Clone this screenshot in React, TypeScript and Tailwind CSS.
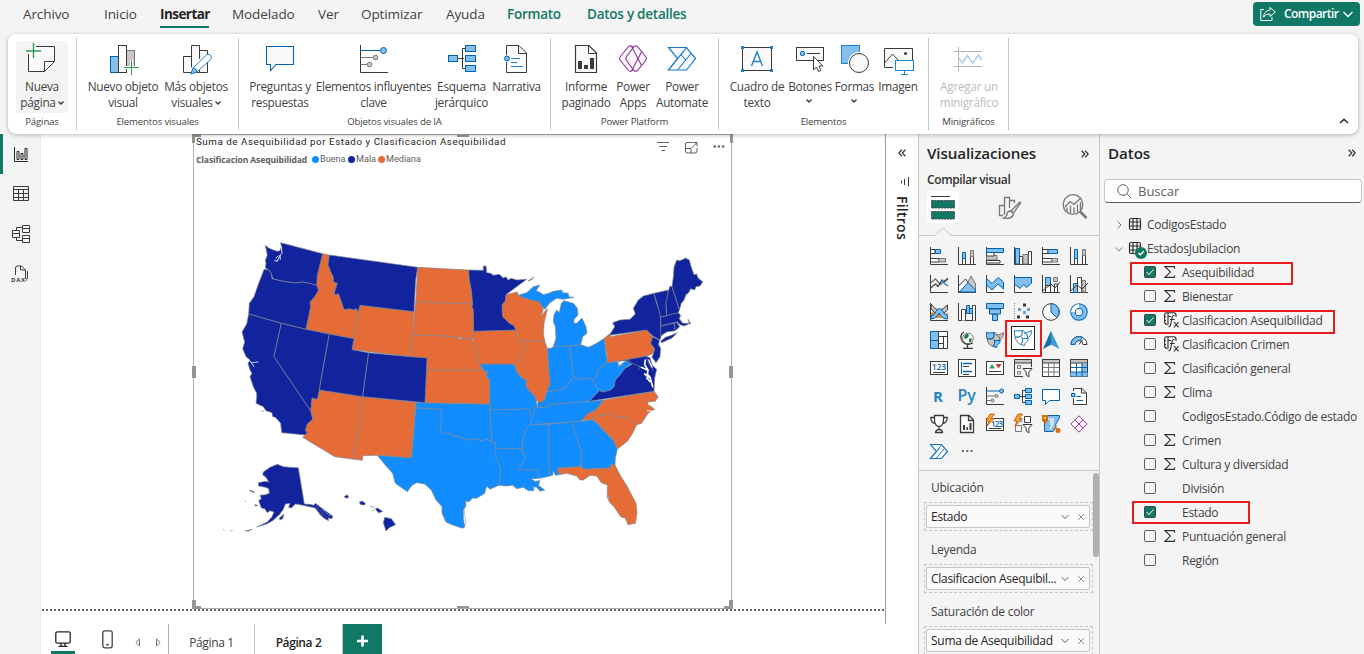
import React from "react";

const K = "#3b3a39";
const B = "#0063b1";
const L = "#83beec";
const G = "#c8c6c4";
const D = "#797775";

/* ---------- Ribbon icons (32 x 32) ---------- */

function Icon32({ children }: { children: React.ReactNode }) {
  return (
    <svg width="32" height="32" viewBox="0 0 32 32" fill="none" className="block shrink-0 overflow-visible">
      {children}
    </svg>
  );
}

const NewPageIcon = (
  <Icon32>
    <path d="M10 3.500H28.500V18L18.500 28.500H2.500V11" fill="#fafafa" stroke={K} />
    <path d="M18.500 28.500V18.500H28.500Z" fill="#fff" stroke={K} />
    <path d="M0 8H15M7.500 0V15" stroke="#2f9e4f" strokeWidth="1.400" />
  </Icon32>
);
const NewVisualIcon = (
  <Icon32>
    <rect x="3.500" y="13.500" width="8" height="16" fill={L} stroke={B} />
    <rect x="19.500" y="7.500" width="8" height="16" fill={G} stroke={D} />
    <rect x="11.500" y="2.500" width="8" height="27" fill="#fafafa" stroke={K} />
    <path d="M16.500 24.500H32M24.500 17V32" stroke="#fff" strokeWidth="3" />
    <path d="M17 24.500H32M24.500 17.500V32" stroke="#2f9e4f" />
  </Icon32>
);
const MoreVisualsIcon = (
  <Icon32>
    <path d="M3.500 29.500V13.500H11.500V29.500ZM11.500 2.500H19.500V29.500H11.500ZM19.500 7.500H27.500V29.500H19.500Z" fill="#fafafa" stroke={K} />
    <path d="M28 12L12 29" stroke="#fff" strokeWidth="7" />
    <path d="M11 31L13 25L27 11.500Q29.500 10.500 31 13Q32 15 30.500 16.500L17 29Z" fill="#fff" stroke="#1f84c7" />
    <path d="M11 31L13 25Q17 25 17 29Z" fill={L} stroke="#1f84c7" />
  </Icon32>
);
const QnaIcon = (
  <Icon32>
    <path d="M2.500 3.500H29.500V21.500H12L6.500 27.500V21.500H2.500Z" fill="#fafafa" stroke={B} strokeWidth="1.100" />
  </Icon32>
);
const InfluencersIcon = (
  <Icon32>
    <path d="M2.500 2V29.500H30" stroke={K} />
    <path d="M2.500 7.500H23" stroke={B} />
    <path d="M2.500 14.500H15M2.500 21.500H9" stroke={D} />
    <circle cx="25.500" cy="7.500" r="3" fill={L} stroke={B} />
    <circle cx="17.500" cy="14.500" r="2.300" fill={G} stroke={D} />
    <circle cx="11.500" cy="21.500" r="2.300" fill={G} stroke={D} />
  </Icon32>
);
const TreeIcon = (
  <Icon32>
    <path d="M11 15.500H18M21 5.500H16.500V25.500H21" stroke={K} />
    <g fill={L} stroke={B}>
      <rect x="2.500" y="12.500" width="9" height="6" />
      <rect x="19.500" y="2.500" width="10" height="6" />
      <rect x="19.500" y="12.500" width="10" height="6" />
      <rect x="19.500" y="22.500" width="10" height="6" />
    </g>
  </Icon32>
);
const NarrativeIcon = (
  <Icon32>
    <path d="M5.500 12V2.500H18L25.500 10V29.500H5.500V19" fill="#fafafa" stroke={K} />
    <path d="M17.500 2.500V10.500H25.500" stroke={K} />
    <circle cx="6" cy="15.500" r="2.500" fill={L} stroke={B} />
    <path d="M10 15.500H19M10 19.500H16M10 23.500H22" stroke="#1f84c7" />
  </Icon32>
);
const ReportIcon = (
  <Icon32>
    <path d="M5.500 2.500H19L26.500 10V29.500H5.500Z" fill="#fafafa" stroke={K} strokeWidth="1.200" />
    <path d="M18.500 2.500V10.500H26.500" stroke={K} />
    <path d="M8 18H12V26H8ZM14 22H18V26H14ZM20 15H24V26H20Z" fill={K} />
  </Icon32>
);
const PowerAppsIcon = (
  <Icon32>
    <g stroke="#8d3a97" strokeWidth="1.100">
      <path d="M11.500 3.500L3 14Q2 15.500 3 17L11.500 27.500Q12.800 29 14.500 28L20 22L14 15.500L20 9L15.500 3.500Q13.500 2.200 11.500 3.500Z" fill="#faf5fb" />
      <path d="M17 3.500L9.500 13.500Q8.200 15.500 9.500 17.500L17 27.500Q18.800 29 20.500 27.500L29 17Q30 15.500 29 14L20.500 3.500Q18.800 2 17 3.500Z" fill="#faf5fb" />
      <path d="M14.500 3.200L24.500 22.500M14.500 28L24.500 9" />
    </g>
  </Icon32>
);
const AutomateIcon = (
  <Icon32>
    <path d="M2.500 4.500H20.500L29.500 15.500L20.500 27H2.500L11.500 15.500Z" fill="#f7fbff" stroke="#1a7ac9" strokeWidth="1.200" />
    <path d="M11.500 15.500L20.500 4.500M15 11.500L20 17.500M2.500 27L18 8M11.500 27L25 10.500" stroke="#1a7ac9" strokeWidth="1.100" />
  </Icon32>
);
const TextBoxIcon = (
  <Icon32>
    <rect x="1.500" y="4.500" width="29" height="23" fill="#fafafa" stroke={K} />
    <path d="M0 3H3V6H0ZM29 3H32V6H29ZM0 26H3V29H0ZM29 26H32V29H29Z" fill="#1f84c7" />
    <path d="M10.500 23L16 9L21.500 23M12.500 18.500H19.500" stroke="#1f84c7" strokeWidth="1.400" />
  </Icon32>
);
const ButtonsIcon = (
  <Icon32>
    <rect x="2.500" y="4.500" width="27" height="13" fill="#fafafa" stroke={K} />
    <circle cx="8.500" cy="10.500" r="2.200" fill={L} stroke={B} />
    <path d="M13 10.500H26" stroke={K} />
    <path d="M19.500 13.500V27L22.500 24L24.500 28.500L26.800 27.500L25 23H28.800Z" fill="#fff" stroke={K} />
  </Icon32>
);
const ShapesIcon = (
  <Icon32>
    <rect x="2.500" y="2.500" width="18" height="18" fill={L} stroke="#1f84c7" />
    <circle cx="20" cy="20" r="11" fill="#fff" />
    <circle cx="20" cy="20" r="9.500" fill="#fafafa" stroke={K} />
  </Icon32>
);
const ImageIcon = (
  <Icon32>
    <path d="M11 24.500H2.500V5.500H30.500V18" fill="#fafafa" stroke={K} />
    <path d="M2.500 20L10.500 11L16 17" stroke={K} />
    <circle cx="23.500" cy="10.500" r="1.500" fill={K} />
    <rect x="13.500" y="17.500" width="18" height="10" fill="#fff" stroke="#1f84c7" />
    <path d="M22.500 28V31.500M19 31.500H26" stroke="#1f84c7" />
  </Icon32>
);
const SparkIcon = (
  <Icon32>
    <path d="M1 8.500H29M1 23.500H29M5.500 4V28" stroke="#b5b3b1" />
    <path d="M6 15.500L9.500 20L14.500 12.500L19.500 20L25.500 12L29 17" stroke="#a9cbe3" strokeWidth="1.400" />
  </Icon32>
);

function Caret({ className = "" }: { className?: string }) {
  return (
    <svg width="6" height="4" viewBox="0 0 6 4" className={className}>
      <path d="M.5 .5L3 3L5.500 .5" fill="none" stroke={K} strokeWidth="1.400" />
    </svg>
  );
}

type Btn = { lines: string[]; caret?: boolean; w: string; icon: React.ReactNode; active?: boolean; off?: boolean };
type Group = { label: string; w: string; pad: string; items: Btn[] };

const groups: Group[] = [
  { label: "Páginas", w: "w-[69px]", pad: "pl-2", items: [{ lines: ["Nueva", "página"], caret: true, w: "w-[52px]", icon: NewPageIcon, active: true }] },
  {
    label: "Elementos visuales", w: "w-[162px]", pad: "pl-[9px]",
    items: [
      { lines: ["Nuevo objeto", "visual"], w: "w-[74px]", icon: NewVisualIcon },
      { lines: ["Más objetos", "visuales"], caret: true, w: "w-[72px]", icon: MoreVisualsIcon },
    ],
  },
  {
    label: "Objetos visuales de IA", w: "w-[312px]", pad: "pl-[5px]",
    items: [
      { lines: ["Preguntas y", "respuestas"], w: "w-[72px]", icon: QnaIcon },
      { lines: ["Elementos influyentes", "clave"], w: "w-[115px]", icon: InfluencersIcon },
      { lines: ["Esquema", "jerárquico"], w: "w-[61px]", icon: TreeIcon },
      { lines: ["Narrativa"], w: "w-[49px]", icon: NarrativeIcon },
    ],
  },
  {
    label: "Power Platform", w: "w-[168px]", pad: "pl-[9px]",
    items: [
      { lines: ["Informe", "paginado"], w: "w-[52px]", icon: ReportIcon },
      { lines: ["Power", "Apps"], w: "w-[42px]", icon: PowerAppsIcon },
      { lines: ["Power", "Automate"], w: "w-[56px]", icon: AutomateIcon },
    ],
  },
  {
    label: "Elementos", w: "w-[210px]", pad: "pl-2",
    items: [
      { lines: ["Cuadro de", "texto"], w: "w-[60px]", icon: TextBoxIcon },
      { lines: ["Botones", ""], caret: true, w: "w-[46px]", icon: ButtonsIcon },
      { lines: ["Formas", ""], caret: true, w: "w-[43px]", icon: ShapesIcon },
      { lines: ["Imagen"], w: "w-[44px]", icon: ImageIcon },
    ],
  },
  { label: "Minigráficos", w: "w-[80px]", pad: "pl-[7px]", items: [{ lines: ["Agregar un", "minigráfico"], w: "w-[66px]", icon: SparkIcon, off: true }] },
];

const tabs: [string, string][] = [
  ["Archivo", "w-[81px]"],
  ["Inicio", "w-[56px]"],
  ["Insertar", "w-[72px]"],
  ["Modelado", "w-[86px]"],
  ["Ver", "w-[43px]"],
  ["Optimizar", "w-[85px]"],
  ["Ayuda", "w-[61px]"],
  ["Formato", "w-[80px]"],
  ["Datos y detalles", "w-[120px]"],
];

function TopBar() {
  return (
    <header className="flex h-[34px] shrink-0 pl-[23px]">
      <nav className="flex text-[13.500px] leading-[29px] tracking-[-0.1px] text-[#424242]">
        {tabs.map(([t, w], i) => (
          <div key={t} className={w}>
            <span
              className={
                i === 2
                  ? "block h-[28px] w-[49px] border-b-2 border-[#117865] font-bold tracking-[-0.55px] whitespace-nowrap text-[#242424]"
                  : i > 6
                    ? "font-semibold tracking-[-0.25px] whitespace-nowrap text-[#117865]"
                    : "whitespace-nowrap"
              }
            >
              {t}
            </span>
          </div>
        ))}
      </nav>
      <button className="mt-[2px] mr-1 ml-auto flex h-6 w-[107px] items-center rounded bg-[#117865] pl-[7px] text-[12px] font-semibold tracking-[-0.55px] text-white">
        <svg width="16" height="16" viewBox="0 0 16 16" fill="none" stroke="#fff" className="mr-[8px]">
          <path d="M4 3.500H.8V14.500H12V11" />
          <path d="M10 1.500L15.300 6L10 10.500V8Q6 7.500 3.500 11Q4 5 10 4Z" />
        </svg>
        Compartir
        <svg width="10" height="7" viewBox="0 0 10 7" fill="none" stroke="#fff" strokeWidth="1.300" className="ml-[5px]">
          <path d="M.5 1L5 5.500L9.500 1" />
        </svg>
      </button>
    </header>
  );
}

function Ribbon() {
  return (
    <section className="relative z-10 mr-[6px] ml-2 flex h-[100px] shrink-0 rounded-lg bg-white shadow-[0_1px_4px_rgba(0,0,0,0.28)]">
      {groups.map((g) => (
        <div key={g.label} className={`my-1 flex flex-col border-r border-[#c8c6c4] ${g.w}`}>
          <div className={`flex h-[75px] pt-[3px] ${g.pad}`}>
            {g.items.map((b) => (
              <div key={b.lines.join()} className={`flex h-[72px] shrink-0 flex-col items-center rounded pt-[2px] ${b.w} ${b.active ? "bg-[#f4f4f4]" : ""} ${b.off ? "text-[#bdbdbd]" : "text-[#424242]"}`}>
                {b.icon}
                <div className="mt-[3px] text-center text-[11.800px] leading-4 tracking-[-0.28px] whitespace-nowrap">
                  {b.lines.map((l, i) => (
                    <div key={i} className="flex items-center justify-center">
                      {l}
                      {b.caret && i === 1 && <Caret className={l ? "mt-[2px] ml-[2px]" : "mt-[5px] ml-[-1px]"} />}
                    </div>
                  ))}
                </div>
              </div>
            ))}
          </div>
          <div className="pt-[2px] text-center text-[9.600px] leading-[14px] tracking-[-0.15px] whitespace-nowrap text-[#424242]">{g.label}</div>
        </div>
      ))}
      <svg width="10" height="6" viewBox="0 0 10 6" className="mt-[84px] mr-[9px] ml-auto">
        <path d="M1 5L5 1.300L9 5" fill="none" stroke={K} strokeWidth="1.700" />
      </svg>
    </section>
  );
}

function LeftRail() {
  const ico = "flex h-10 w-[41px] items-center justify-center";
  return (
    <aside className="w-[41px] shrink-0 border-r border-[#ebebeb]">
      <div className={`${ico} border-l-[3px] border-[#117865] pr-[3px]`}>
        <svg width="15" height="15" viewBox="0 0 15 15" fill="none" stroke="#242424">
          <path d="M1.500 0V14.500H15M4 12.500V4.500H6V12.500ZM8 12.500V6.500H10V12.500ZM12 12.500V1.500H14V12.500Z" />
        </svg>
      </div>
      <div className={`${ico} pb-[1px] pl-[1px]`}>
        <svg width="16" height="15" viewBox="0 0 16 15" fill="none" stroke={K}>
          <path d="M.5 .5H15.500V14.500H.5ZM.5 3.500H15.500M.5 7.500H15.500M.5 11.500H15.500M5.500 3.500V14.500M10.500 3.500V14.500" />
        </svg>
      </div>
      <div className={`${ico} pl-[1px]`}>
        <svg width="18" height="18" viewBox="0 0 18 18" fill="none" stroke={K}>
          <path d="M.5 5.500H7.500V12.500H.5ZM.5 8.500H7.500M10.500 .5H17.500V7.500H10.500ZM10.500 3.500H17.500M10.500 10.500H17.500V17.500H10.500ZM10.500 13.500H17.500M4.500 5.500V2.500H10.500M4.500 12.500V15.500H10.500" />
        </svg>
      </div>
      <div className={`${ico} pr-1`}>
        <svg width="18" height="18" viewBox="0 0 18 18" fill="none" stroke={K} className="overflow-visible">
          <path d="M5.500 10V3Q5.500 1 7.500 1H11.500L15.500 5V14M10.500 1V5H15.500M17.500 6V12Q17.500 14.500 15.500 16" />
          <text x="1" y="17" fontSize="6" fontWeight="700" fontFamily="Open Sans" fill={K} stroke="none" textLength="14">DAX</text>
        </svg>
      </div>
    </aside>
  );
}

/* ---------- Map ---------- */

const mala = [
  "226,346 236,354 250,360 262,364 270,362 274,350 272,338 398,371 382,436 380,466 358,460 335,456 318,459 300,457 284,455 270,452 248,446 244,430 236,420 226,414 228,400 226,390 232,376",
  "222,418 236,420 244,430 246,446 270,452 284,455 300,457 318,459 335,456 358,460 380,466 386,480 374,500 360,516 362,530 348,598 274,580 176,552 178,520 192,500 206,460 214,440",
  "176,552 274,580 252,680 362,842 368,868 352,882 346,900 351,908 346,915 275,908 272,880 256,862 248,860 246,848 228,842 220,830 198,820 200,804 200,790 190,770 180,740 186,730 180,720 174,700 180,690 168,680 158,656 164,636 156,606 170,582",
  "274,580 348,598 418,612 400,710 388,780 382,808 366,804 362,842 252,680",
  "418,375 683,412 677,450 672,545 510,526 504,546 499,536 490,540 480,536 462,539 454,515 446,492 432,494 436,478 442,460 430,456 430,442 422,425 414,404",
  "418,612 492,626 486,659 536,668 518,800 388,780 400,710",
  "536,668 662,680 711,684 705,818 518,800",
  "836,420 880,421 880,408 888,408 890,428 902,430 910,436 928,433 940,444 948,440 954,450 964,445 980,450 1010,448 980,470 948,494 946,512 936,525 938,560 958,580 970,586 978,600 851,604 850,540 846,530 848,522 844,480 838,450",
  "1258,616 1274,590 1268,578 1290,570 1320,568 1336,552 1330,535 1345,510 1360,498 1392,490 1400,520 1408,540 1412,562 1412,588 1414,616 1410,630 1388,618 1370,600",
  "1392,490 1436,480 1432,510 1428,520 1430,558 1412,562 1404,530",
  "1436,480 1440,468 1446,470 1456,500 1468,540 1464,550 1430,558 1428,520",
  "1446,470 1450,440 1452,412 1460,390 1468,392 1480,388 1486,384 1498,390 1504,412 1512,434 1520,432 1524,444 1538,455 1530,468 1518,470 1514,480 1502,476 1496,488 1488,494 1482,510 1474,520 1468,540 1456,500",
  "1412,562 1464,548 1472,556 1468,566 1478,580 1498,580 1494,568 1502,580 1482,588 1470,584 1462,576 1412,588",
  "1412,588 1452,580 1456,602 1430,606 1412,618",
  "1452,580 1460,577 1469,590 1456,602",
  "1412,634 1426,622 1444,616 1462,608 1446,624 1415,638",
  "1388,620 1408,630 1406,645 1412,655 1410,680 1398,698 1386,682 1394,657 1382,640",
  "1282,694 1370,678 1380,684 1386,705 1400,718 1394,745 1392,784 1198,814 1228,782 1240,786 1262,780 1272,770 1276,750 1290,735 1305,715 1326,703 1310,692",
];
const mediana = [
  "398,371 418,375 414,404 422,425 430,442 430,456 442,460 436,478 432,494 446,492 454,515 462,539 480,536 490,540 499,536 504,546 510,526 492,626 418,612 348,598 362,530 360,516 374,500 386,480 380,466 382,436",
  "510,526 672,545 662,680 486,659 492,626",
  "388,780 518,800 493,988 434,980 338,922 346,915 351,908 346,900 352,882 368,868 362,842 366,804 382,808",
  "518,800 677,817 664,983 562,976 518,977 517,991 493,988",
  "683,412 836,420 838,450 844,480 848,522 677,516",
  "677,516 848,522 846,530 850,540 851,604 852,628 840,626 820,626 800,620 667,614",
  "667,614 800,620 810,627 820,626 840,626 850,632 858,650 862,680 868,702 880,720 709,720 711,684 662,680",
  "709,720 880,720 892,728 888,740 898,750 899,822 705,818",
  "851,604 978,600 980,620 994,634 1005,650 1004,660 990,668 990,685 980,700 976,708 968,702 868,702 862,680 858,650 850,632",
  "948,494 982,486 985,496 1000,504 1030,512 1048,516 1056,530 1060,540 1052,560 1072,535 1068,555 1062,580 1060,610 1064,632 994,634 980,620 978,600 970,586 958,580 938,560 936,525 946,512",
  "994,634 1064,632 1072,656 1076,720 1080,760 1070,785 1062,812 1046,816 1038,812 1036,800 1016,780 1008,766 1010,752 990,738 978,720 976,708 990,685 990,668 1004,660 1005,650",
  "1243,625 1258,612 1262,620 1370,600 1382,614 1388,620 1382,640 1394,657 1386,672 1370,678 1254,698",
  "1242,810 1392,784 1404,800 1396,814 1372,816 1376,824 1394,838 1374,850 1355,880 1340,884 1305,858 1275,864 1265,853 1225,856 1208,869 1176,870 1195,850 1216,842",
  "1208,869 1225,856 1265,853 1275,864 1305,858 1340,884 1325,915 1312,934 1284,956 1278,950 1270,930 1240,900 1222,880",
  "1102,1015 1176,1010 1180,1018 1262,1014 1262,1004 1275,1005 1290,1035 1312,1070 1338,1120 1341,1150 1336,1180 1314,1184 1306,1165 1292,1160 1272,1130 1260,1118 1254,1108 1262,1098 1252,1104 1252,1065 1234,1058 1220,1038 1200,1036 1180,1050 1170,1050 1160,1038 1130,1030 1108,1034",
];
const buena = [
  "985,496 1010,488 1030,470 1050,465 1038,482 1048,486 1060,494 1076,490 1090,484 1115,480 1118,488 1135,490 1136,500 1152,502 1120,508 1100,505 1080,518 1064,538 1056,530 1048,516 1030,512 1000,504",
  "1090,650 1098,625 1096,590 1090,575 1092,555 1100,540 1108,548 1114,520 1122,512 1150,520 1162,535 1164,555 1152,568 1152,580 1160,580 1176,564 1188,590 1191,610 1178,620 1172,644 1140,648",
  "1072,656 1084,654 1090,650 1140,648 1148,720 1150,742 1138,758 1122,776 1095,782 1070,786 1080,760 1076,720",
  "1140,648 1172,644 1195,652 1220,640 1243,625 1250,690 1248,705 1226,715 1222,735 1210,750 1195,744 1170,748 1150,742",
  "1250,680 1254,698 1282,694 1286,710 1300,698 1310,692 1328,700 1308,712 1296,728 1290,735 1276,750 1272,770 1262,780 1240,786 1228,782 1212,760 1210,750 1222,735 1226,715 1248,705",
  "1070,786 1095,782 1122,776 1138,758 1150,742 1170,748 1195,744 1210,750 1212,760 1228,782 1198,814 1075,824 1072,832 1042,832 1044,816 1062,812",
  "1035,833 1072,831 1075,824 1198,814 1242,810 1216,842 1195,850 1176,872 1146,877 1020,884 1028,855",
  "1146,877 1208,869 1222,880 1240,900 1270,930 1282,956 1276,985 1275,1005 1262,1004 1262,1014 1180,1018 1172,1005 1174,965 1160,920",
  "1076,882 1146,877 1160,920 1174,965 1172,1010 1102,1015 1108,1034 1096,1036 1090,1022 1088,1036 1080,1038 1076,1000",
  "1020,884 1076,882 1076,1000 1080,1038 1050,1045 1040,1020 986,1020 1004,985 998,955 996,940 1005,900",
  "916,955 998,955 1004,985 986,1020 1040,1020 1050,1045 1024,1046 1034,1054 1050,1052 1045,1066 1064,1080 1050,1084 1040,1072 1030,1070 1032,1082 1015,1082 1000,1072 980,1076 968,1066 950,1068 926,1066 930,1040 932,1015 918,985",
  "900,840 1018,836 1022,852 1028,855 1020,884 1005,900 996,940 998,955 916,955 916,938 905,935 902,890",
  "868,702 968,702 976,708 978,720 990,738 1010,752 1008,766 1016,780 1036,800 1038,812 1042,832 1035,833 1028,855 1020,852 1018,836 900,840 899,822 898,750 888,740 892,728 880,720",
  "677,817 705,818 899,822 902,890 905,935 890,928 875,932 860,926 845,930 830,930 812,922 790,918 775,910 762,910 752,904 754,838 677,834",
  "677,834 754,838 752,904 762,910 775,910 790,918 812,922 830,930 845,930 860,926 875,932 890,928 905,935 916,938 918,985 932,1015 930,1040 926,1066 900,1078 890,1068 884,1090 860,1105 848,1104 836,1116 826,1112 828,1128 820,1140 820,1165 824,1190 818,1195 790,1186 768,1176 756,1150 756,1130 738,1110 724,1080 704,1062 680,1058 666,1066 652,1085 616,1060 608,1030 590,1010 562,976 664,983",
];

function UsMap() {
  return (
    <svg width="538" height="472" viewBox="12 18 1614 1416" className="block" strokeLinejoin="round">
      <g stroke="#80878f" strokeWidth="2">
        {buena.map((p) => <polygon key={p} points={p} fill="#118dff" />)}
        {mediana.map((p) => <polygon key={p} points={p} fill="#e66c37" />)}
        {mala.map((p) => <polygon key={p} points={p} fill="#12239e" />)}
        <path d="M1014,453 L1022,448 1032,441 1024,450Z" fill="#118dff" />
        <path d="M325,1013 L343,1122 358,1123 372,1126 376,1120 400,1138 428,1158 426,1166 414,1164 416,1172 404,1166 390,1154 376,1134 358,1130 330,1124 316,1122 304,1134 296,1132 300,1120 286,1122 280,1138 270,1152 248,1172 230,1182 200,1191 232,1176 246,1160 252,1146 240,1142 232,1148 224,1136 214,1134 206,1112 214,1106 210,1096 226,1094 238,1090 236,1076 226,1072 206,1068 205,1058 226,1054 236,1056 228,1042 218,1034 220,1026 240,1012 262,1003 280,1010 300,1012Z" fill="#12239e" />
        <path d="M268,1164L282,1152 278,1166 270,1170ZM178,1080L190,1084 194,1088 182,1084ZM194,1124L204,1126 196,1128ZM166,1203L186,1198 176,1203ZM98,1198L104,1201M120,1203L128,1201M164,1114L168,1114M212,842L222,844" fill="#12239e" />
        <path d="M462,1100L472,1094 476,1102 470,1105ZM508,1116L516,1113 526,1120 524,1125 512,1124ZM540,1129L556,1132M546,1140L552,1142M556,1137L562,1134 578,1144 566,1149ZM584,1162L604,1166 617,1184 598,1193 588,1203 580,1178Z" fill="#12239e" />
        <path d="M378,1128L412,1164M386,1126L420,1160M376,1136L396,1156M398,1140L424,1158" stroke="#a9a9b4" strokeWidth="2" strokeDasharray="5 3" fill="none" />
      </g>
      <g fill="none" stroke="#fff" strokeLinecap="round">
        <path d="M274,350L276,370 270,376 262,394 254,392M264,378L258,384M270,376L271,388" strokeWidth="2.600" />
        <path d="M174,690L186,698 204,696M184,698L192,710" strokeWidth="2.400" />
        <path d="M1366,690L1364,704 1374,720 1372,732 1380,742 1388,770M1372,720L1354,712M1376,742L1364,732M1380,754L1370,744" strokeWidth="5" />
        <path d="M1376,690L1386,712" strokeWidth="4" />
        <path d="M1376,824L1398,822M1372,842L1388,844" strokeWidth="3" />
      </g>
      <g fill="none" stroke="#80878f" strokeWidth="2">
        <path d="M1282,694L1290,708 1298,700 1316,690 1326,700 1350,710 1346,720M1370,678L1376,700 1390,722" />
        <path d="M830,1110L822,1136 828,1180 822,1194M1390,780L1406,806M1306,1060L1314,1080" strokeWidth="1.600" />
      </g>
    </svg>
  );
}

function Visual() {
  return (
    <div className="relative ml-[152px] h-[475px] w-[539px] border border-[#b3b0ad] bg-white font-['Roboto',sans-serif]">
      <div className="flex h-[18px] justify-between pl-[2px]">
        <div className="text-[9.800px] leading-[14px] tracking-[0.540px] whitespace-nowrap text-[#252423]">
          Suma de Asequibilidad por Estado y Clasificacion Asequibilidad
        </div>
        <svg width="72" height="18" viewBox="0 0 72 18" fill="none" stroke="#605e5c" className="mt-[-1px] mr-[2px] overflow-visible">
          <path d="M0 8.500H12M2.500 12.500H10M4.500 16.500H8" />
          <path d="M35 8.500H30Q28.500 8.500 28.500 10V17Q28.500 19 30 19H38Q40 19 40 17V14M28.500 14.500H34V19M34.500 14L40 8.500M36 8.500H40V12.500" />
          <path d="M56.500 12.500H59M60.700 12.500H63.200M64.900 12.500H67.400" strokeWidth="2" />
        </svg>
      </div>
      <div className="flex h-[14px] items-center pl-[2px] text-[9.100px] text-[#605e5c]">
        <span className="w-[116px] font-['Open_Sans',sans-serif] text-[8.600px] font-bold tracking-[-0.120px] whitespace-nowrap">Clasificacion Asequibilidad</span>
        {[
          ["Buena", "bg-[#118dff]", "w-[36px]"],
          ["Mala", "bg-[#12239e]", "w-[30px]"],
          ["Mediana", "bg-[#e66c37]", "w-[50px]"],
        ].map(([t, c, w]) => (
          <span key={t} className={`flex items-center gap-[1px] ${w}`}>
            <i className={`size-[7px] shrink-0 rounded-full ${c}`} />
            {t}
          </span>
        ))}
      </div>
      <div className="absolute top-[1px] left-0">
        <UsMap />
      </div>
      <i className="absolute -top-px -left-[2px] h-[9px] w-[9px] border-t-[3px] border-l-[3px] border-[#979593]" />
      <i className="absolute -top-px -right-[2px] h-[9px] w-[3px] bg-[#979593]" />
      <i className="absolute -bottom-px -left-[2px] h-[9px] w-[9px] border-b-[3px] border-l-[4px] border-[#979593]" />
      <i className="absolute -right-[2px] -bottom-px h-[9px] w-[9px] border-r-[4px] border-b-[3px] border-[#979593]" />
      <i className="absolute top-0 left-[263px] h-[2px] w-3 bg-[#979593]" />
      <i className="absolute bottom-0 left-[263px] h-[2px] w-3 bg-[#979593]" />
      <i className="absolute top-[231px] -left-[2px] h-3 w-1 bg-[#979593]" />
      <i className="absolute top-[231px] -right-[2px] h-3 w-1 bg-[#979593]" />
    </div>
  );
}

function DoubleChevron({ left }: { left?: boolean }) {
  return (
    <svg width="8" height="8" viewBox="0 0 8 8" fill="none" stroke={K} strokeWidth="1.300" className={left ? "rotate-180" : ""}>
      <path d="M.7 .7L3.700 4L.7 7.300M4.200 .7L7.200 4L4.200 7.300" />
    </svg>
  );
}

function Canvas() {
  return (
    <main className="flex w-[877px] shrink-0 flex-col bg-white">
      <div className="flex h-[490px]">
        <div className="flex w-[844px] flex-col">
          <Visual />
          <div className="ml-[1px] h-[2px] bg-[repeating-linear-gradient(90deg,#666_0_2px,#fff_2px_4px)]" />
        </div>
        <aside className="flex w-[33px] flex-col items-center border-l border-[#a19f9d] pt-[15px]">
          <DoubleChevron left />
          <svg width="10" height="10" viewBox="0 0 10 10" stroke={K} className="mt-[20px] ml-[6px]">
            <path d="M1.500 3.500V6.500M4.500 2V8M8.500 0V9.500" />
          </svg>
          <div className="mt-[9px] text-[14px] leading-[18px] font-semibold tracking-[0.25px] text-[#242424] [writing-mode:vertical-rl]">Filtros</div>
        </aside>
      </div>
      <footer className="flex h-[30px] text-[12px] tracking-[-0.35px] text-[#424242]">
        <div className="ml-[10px] flex h-[30px] w-6 flex-col items-center justify-between border-b-[3px] border-[#117865] pt-[7px]">
          <svg width="16" height="16" viewBox="0 0 16 16" fill="none" stroke="#242424" strokeWidth="1.300">
            <rect x=".8" y=".8" width="14.400" height="11.400" rx="1.500" />
            <path d="M6 12V15M10 12V15M3.500 15.300H12.500" />
          </svg>
        </div>
        <svg width="11" height="19" viewBox="0 0 11 19" fill="none" stroke="#424242" strokeWidth="1.300" className="mt-[6px] ml-[27px]">
          <rect x=".8" y=".8" width="9.400" height="17" rx="2" />
          <path d="M4 14.800H7" />
        </svg>
        <svg width="26" height="9" viewBox="0 0 26 9" fill="none" stroke="#797775" className="mt-[14px] ml-[22px]">
          <path d="M4.500 1V8L.8 4.500ZM21.500 1V8L25.200 4.500Z" />
        </svg>
        <div className="ml-[7px] flex w-[86px] items-center justify-center border-l border-[#b3b0ad] pt-[8px]">Página 1</div>
        <div className="flex w-[88px] items-center justify-center border-l border-[#c8c6c4] pt-[8px] font-semibold tracking-[-0.4px] text-[#242424]">Página 2</div>
        <div className="flex w-10 items-center justify-center border-l border-[#c8c6c4] bg-[#117865]">
          <svg width="12" height="12" viewBox="0 0 12 12" className="mt-[3px]" stroke="#fff" strokeWidth="2.600">
            <path d="M0 6H11M5.500 .5V11.500" />
          </svg>
        </div>
      </footer>
    </main>
  );
}

/* ---------- Visual gallery icons (18 x 18) ---------- */

const axis = <path d="M.5 0V17.500H18" stroke={K} />;
const shapeA = "M.5 1.500Q4 2.500 8 1.500V6Q6 8.500 1.200 8Q0 5 .5 1.500Z";
const shapeB = "M8 1.500Q10.500 1.500 10.500 4L13 5.500L14 9.500H8.500L7 7.500Q8 6 8 1.500Z";
const shapeC = "M1.200 8Q5 8.500 7 7.500L8.500 9.500V13L7 15.500Q2 14 1.200 8Z";
const shapeD = "M8.500 9.500H14Q14.500 12 12 13.500Q10.500 14.500 10.500 16.500L7 15.500L8.500 13Z";
const shapeE = "M10.500 4Q14 4 17.500 1.500Q18 6 14 9.500L13 5.500Z";
const gallery: React.ReactNode[] = [
  <>{axis}<path d="M.5 2.500H5V6.500H.5Z" fill="#fff" stroke={K} /><path d="M5.500 2.500H10.500V6.500H5.500Z" fill={L} stroke={B} /><path d="M.5 11.500H9V15H.5Z" fill="#fff" stroke={K} /><path d="M9 11.500H15.500V15H9Z" fill={G} stroke={D} /></>,
  <>{axis}<path d="M4.500 11.500H7.500V17.500H4.500ZM12.500 9.500H15.500V17.500H12.500Z" fill="#fff" stroke={K} /><path d="M4.500 5.500H7.500V11.500H4.500Z" fill={L} stroke={B} /><path d="M12.500 3.500H15.500V9.500H12.500Z" fill={G} stroke={D} /></>,
  <>{axis}<path d="M.5 8.500H11V13H.5Z" fill={G} stroke={D} /><path d="M.5 5.500H8V9H.5ZM.5 13.500H14V16H.5Z" fill="#fff" stroke={K} /><path d="M.5 1.500H17.500V5.500H.5Z" fill={L} stroke={B} /></>,
  <>{axis}<path d="M1.500 1.500H5.500V17H1.500Z" fill={L} stroke={B} /><path d="M5.500 9.500H8.500V17.500H5.500ZM14.500 4.500H17.500V17.500H14.500Z" fill="#fff" stroke={K} /><path d="M9 7.500H14V17H9Z" fill={G} stroke={D} /></>,
  <>{axis}<path d="M.5 2.500H6V6.500H.5ZM.5 11.500H10V15H.5Z" fill="#fff" stroke={K} /><path d="M6 2.500H15.500V6.500H6Z" fill={L} stroke={B} /><path d="M10 11.500H15.500V15H10Z" fill={G} stroke={D} /></>,
  <>{axis}<path d="M4.500 11.500H7.500V17.500H4.500ZM12.500 8.500H15.500V17.500H12.500Z" fill="#fff" stroke={K} /><path d="M4.500 2.500H7.500V11.500H4.500Z" fill={L} stroke={B} /><path d="M12.500 2.500H15.500V8.500H12.500Z" fill={G} stroke={D} /></>,

  <>{axis}<path d="M.5 8L5.500 4L10.500 9.500L18 3" stroke={D} strokeWidth="1.400" /><path d="M.5 13L5.500 9L8 11.500L12 5L14 7L18 4" stroke={K} strokeWidth="1.200" /><path d="M12 5L15 9L18 11" stroke="#1f84c7" strokeWidth="1.400" /></>,
  <>{axis}<path d="M.5 17V11L7.500 4L13 11V17Z" fill="#fff" stroke={K} /><path d="M9.500 8L13 1L17.500 9V17H11Z" fill={G} stroke={D} /><path d="M1.500 17L10 7.500L17.500 15V17Z" fill={L} stroke={B} /></>,
  <>{axis}<path d="M.5 3.500L6 8.500L12 2.500L17.500 7V14L12 9L6 15L.5 10Z" fill={L} stroke={B} /></>,
  <>{axis}<path d="M.5 2.500H17.500V8L13 12.500L9.500 9.500L6 13.500L.5 9Z" fill={L} stroke={B} /></>,
  <>{axis}<path d="M3.500 2.500H8.500V10.500H3.500Z" fill={L} stroke={B} /><path d="M3.500 10.500H8.500V17.500H3.500ZM12.500 9H15.500V17.500H12.500Z" fill="#fff" stroke={K} /><path d="M11.500 2.500H15.500V6.500H11.500Z" fill={G} stroke={D} /><path d="M.5 16L9 9L13 13L18 7" stroke={K} /></>,
  <>{axis}<path d="M3.500 8.500H7.500V17.500H3.500Z" fill={L} stroke={B} /><path d="M7.500 2.500H11.500V17.500H7.500Z" fill="#fff" stroke={K} /><path d="M12 5.500H15.500V17H12Z" fill={G} stroke={D} /><path d="M.5 16L7 10L12 14L18 8" stroke={K} /></>,

  <>{axis}<path d="M1 9Q5 9 9 12Q13 15 17.500 9V15H1Z" fill="#e8912d" /><path d="M1 1Q5 7 9 7Q13 7 17.500 2V7Q13 12 9 11.500Q5 11 1 6Z" fill={G} stroke={K} /><path d="M1 13Q4 13 7 7Q9 4 12 7Q14 12 17.500 12V16Q12 16 10 11Q9 9 7 13Q5 16 1 16Z" fill={L} stroke={B} /></>,
  <>{axis}<path d="M3.500 17.500V6.500H7.500V17.500M14.500 17.500V2.500H17.500V17.500" fill="#fff" stroke={K} /><path d="M8.500 2.500H11.500V10.500H8.500ZM11.500 5.500H14.500V10.500H11.500Z" fill={L} stroke={B} /></>,
  <><path d="M.5 .5H17.500V5.500H.5ZM3.500 6H14.500V11H3.500ZM6.500 11.500H11.500V17.500H6.500Z" fill={L} stroke={B} /></>,
  <><path d="M.5 0V17.500H18" stroke={D} strokeDasharray="1 1.500" /><path d="M3 12H6V15H3ZM12 12H15V15H12ZM12 3H9V0H12Z" fill={K} transform="translate(0 .5)" /><path d="M4 5H7V8H4ZM9 8H12V11H9ZM13 5H16V8H13Z" fill="#60a5dc" /></>,
  <><circle cx="9" cy="9" r="8.300" fill="#fff" stroke={K} /><path d="M9 .7V9L14.800 14.800A8.300 8.300 0 0 0 9 .7Z" fill={L} stroke={B} /></>,
  <><circle cx="9" cy="9" r="6" stroke={B} strokeWidth="5.500" /><circle cx="9" cy="9" r="6" stroke={L} strokeWidth="3.600" /><path d="M3 9A6 6 0 0 1 9 3" stroke="#fff" strokeWidth="3.600" /></>,

  <><path d="M.5 .5H17.500V17.500H.5Z" fill="#fff" stroke={K} /><path d="M.5 .5H8.500V9.500H.5Z" fill={L} stroke={B} /><path d="M.5 9.500H8.500V17.500H.5Z" fill={L} stroke={B} /><path d="M8.500 5.500H17.500M13.500 5.500V17.500M8.500 12.500H13.500M8.500 .5V17.500" stroke={K} /></>,
  <><circle cx="10" cy="7.500" r="5.300" fill="#fff" stroke={D} /><path d="M7 4L10 2.500L11 5L8 8L6 7ZM11 8L14 7L13 11L11 11Z" fill="#107c41" /><path d="M6 1Q1 4 4 10Q8 15.500 15 12M9.500 14V17M5 17.300H15" stroke={K} strokeWidth="1.200" /></>,
  <><path d={shapeB} fill={G} stroke={D} /><path d={shapeC} fill={G} stroke={D} /><path d={shapeE} fill={G} stroke={D} /><path d={shapeA} fill={L} stroke={B} /><path d={shapeD} fill={L} stroke={B} /></>,
  null,
  <><path d="M9 0L17.500 18L9 13.500L1 18Z" fill="#3b9bd8" /><path d="M9 0V13.500L1 18Z" fill="#1b6fa8" /></>,
  <><path d="M1 13.500A8 8 0 0 1 17 13.500H13A4 4 0 0 0 5 13.500Z" fill="#fff" stroke={K} /><path d="M1 13.500A8 8 0 0 1 12 6.100L10.500 9.800A4 4 0 0 0 5 13.500Z" fill={L} stroke={B} /><path d="M9 13.500L13 8.500" stroke={K} /></>,

  <><rect x=".5" y="2.500" width="17" height="13" fill="#fff" stroke={K} /><text x="2" y="11" fontSize="8" fontFamily="Open Sans" fontWeight="600" fill={B} textLength="14">123</text><path d="M3 13.500H15" stroke={K} /></>,
  <><rect x=".5" y=".5" width="17" height="17" fill="#fff" stroke={K} /><path d="M3.500 3V15" stroke={B} /><path d="M5 4.500H14M5 12.500H14" stroke={B} strokeWidth="1.600" /><path d="M5 7.500H11M5 15.500H11" stroke={K} /></>,
  <><rect x=".5" y="2.500" width="17" height="13" fill="#fff" stroke={K} /><path d="M3 9.500L6 5L9 9.500Z" fill="#359b5d" /><path d="M9.500 5H15.500L12.500 9.500Z" fill="#d13438" /><path d="M3 12.500H15" stroke={K} /></>,
  <><path d="M.5 .5H17.500V4H.5Z" fill={G} stroke={K} /><path d="M.5 4V17.500H9M17.500 4V8" stroke={K} /><path d="M3.500 6.500H6.500V9.500H3.500ZM3.500 12.500H6.500V15H3.500Z" stroke={D} /><path d="M9 9.500H18L14.800 13V18L12.200 16V13Z" fill="#fff" stroke={K} /></>,
  <><rect x=".5" y=".5" width="17" height="17" fill="#fff" stroke={K} /><path d="M.5 .5H17.500V4H.5Z" fill={G} stroke={K} /><path d="M.5 8.500H17.500M.5 13H17.500M6.500 4V17.500M12 4V17.500" stroke={D} /></>,
  <><rect x=".5" y=".5" width="17" height="17" fill="#fff" stroke={K} /><path d="M.5 .5H17.500V4H.5Z" fill={G} stroke={K} /><path d="M11.500 4.500H17V13H11.500ZM.5 13H17.500V17.500H.5Z" fill={L} /><path d="M.5 8.500H17.500M.5 13H17.500M6.500 4V17.500M12 4V17.500" stroke={B} /></>,

  <text x="3" y="15" fontSize="15" fontFamily="Open Sans" fontWeight="700" fill="#2684bd">R</text>,
  <text x="-.5" y="14" fontSize="16" fontFamily="Open Sans" fontWeight="600" fill="#2684bd">Py</text>,
  <>{axis}<path d="M.5 4H14" stroke={B} /><path d="M1 9H9M1 13.500H5" stroke={D} /><circle cx="15.500" cy="4" r="2" fill={L} stroke={B} /><circle cx="10.500" cy="9" r="1.500" fill={G} stroke={D} /><circle cx="6.500" cy="13.500" r="1.500" fill={G} stroke={D} /></>,
  <><path d="M6 9.500H11M11 3.500H8.500V15.500H11" stroke={K} /><g fill={L} stroke={B}><path d="M.5 7.500H5.500V11.500H.5ZM11.500 1.500H17.500V5.500H11.500ZM11.500 7.500H17.500V11.500H11.500ZM11.500 13.500H17.500V17.500H11.500Z" /></g></>,
  <path d="M.5 2.500H17.500V13.500H7.500L3.500 17.500V13.500H.5Z" fill="#fff" stroke={B} />,
  <><path d="M3.500 4V1.500H12L16.500 6V17.500H3.500V11M11.500 1.500V6H16.500" fill="#fff" stroke={K} /><path d="M1.500 6.500H5V9.500H1.500Z" fill={L} stroke={B} /><path d="M6.500 9.500H11M6.500 13.500H13" stroke={B} /></>,

  <><path d="M4.500 .5H13.500V6Q13 11 9 11.500Q5 11 4.500 6ZM4.500 2.500H.8Q.8 8 5.500 8.500M13.500 2.500H17.200Q17.200 8 12.500 8.500M9 11.500V14.500M5.500 17.500Q6 14.500 9 14.500Q12 14.500 12.500 17.500Z" fill="#fff" stroke={K} strokeWidth="1.300" /></>,
  <><path d="M2.500 .5H11L15.500 5V17.500H2.500ZM10.500 .5V5.500H15.500" fill="#fff" stroke={K} strokeWidth="1.300" /><path d="M5 10H7V15H5ZM8.500 12H10V15H8.500ZM11.500 8H13.500V15H11.500Z" fill={K} /></>,
  <><rect x=".5" y="3.500" width="17" height="12" fill="#fff" stroke={K} /><text x="5" y="12" fontSize="8" fontFamily="Open Sans" fontWeight="600" fill={B} textLength="12">123</text><path d="M3 13.500H15" stroke={K} /><path d="M4 -1L0 6H3L1 11L8 3.500H5L8.500 -1Z" fill="#f6a623" stroke="#c55a11" strokeWidth=".9" /></>,
  <><path d="M10.500 1.500H16.500V7.500H10.500Z" fill="#fff" stroke={K} /><path d="M1.500 10.500H7.500V16.500H1.500Z" stroke={D} /><path d="M5.500 3.500H8.500V7.500H5.500Z" fill={L} /><path d="M9 9.500H18L14.800 13V18L12.200 16V13Z" fill="#fff" stroke={K} /><path d="M4 -1L0 6H3L1 11L8 3.500H5L8.500 -1Z" fill="#f6a623" stroke="#c55a11" strokeWidth=".9" /></>,
  <><path d="M3 .5H17.500Q18 4 15 7Q13 9 14 12L11 16.500H2.500V8Z" fill={L} stroke={B} /><path d="M6 4H9V10M11 3V9L8 14" stroke="#fff" strokeWidth="1.200" /><path d="M0 0H6V5.500L3 9L0 5.500Z" fill="#d66e0c" /><circle cx="3" cy="3" r="1.100" fill="#fff" /><circle cx="16" cy="15.500" r="2.500" fill="#d66e0c" /><rect x="12.500" y="12" width="2" height="2" fill="#d66e0c" /></>,
  <path d="M9 .8L17.200 9L9 17.200L.8 9ZM5 5L13 13M13 5L5 13" fill="#fbf5fc" stroke="#8d3a97" />,

  <><path d="M.5 1.500H11.500L17.500 8.500L11.500 15.500H.5L6.500 8.500Z" fill="#fff" stroke="#1a7ac9" strokeWidth="1.200" /><path d="M6.500 8.500L11.500 2M1 15L9.500 5M6 15.500L14.500 5.500" stroke="#1a7ac9" /></>,
  <path d="M4 8H6M8.300 8H10.300M12.600 8H14.600" stroke={K} strokeWidth="1.600" />,
];

function Gallery() {
  return (
    <div className="grid h-[235px] shrink-0 auto-rows-[28px] grid-cols-[repeat(6,28px)] border-b border-[#c8c6c4] pt-[6px] pl-[6px]">
      {gallery.map((g, i) =>
        i === 21 ? (
          <div key={i} className="flex items-center justify-center">
            <div className="-mx-[5px] -mt-[9px] -mb-[5px] flex size-[37px] shrink-0 items-center justify-center border-2 border-[#e91c1c]">
              <div className="flex size-6 items-center justify-center border border-[#242424] bg-white">
                <svg width="18" height="18" viewBox="0 0 18 18" fill="#fff">
                  <path d={shapeB} stroke={D} />
                  <path d={shapeC} stroke={D} />
                  <path d={shapeE} stroke="#1f84c7" />
                  <path d={shapeA} stroke="#1f84c7" />
                  <path d={shapeD} stroke="#1f84c7" />
                </svg>
              </div>
            </div>
          </div>
        ) : (
          <div key={i} className="flex items-center justify-center">
            <svg width="18" height="18" viewBox="0 0 18 18" fill="none" className="overflow-visible">{g}</svg>
          </div>
        ),
      )}
    </div>
  );
}

function Well({ title, value }: { title: string; value: string }) {
  return (
    <div className="h-[62px] pt-[7px]">
      <div className="pl-[7px] text-[12px] leading-5 tracking-[-0.25px] text-[#424242]">{title}</div>
      <div className="mt-[4px] h-[29px] w-[169px] border border-dashed border-[#c8c6c4] p-[2px] pl-[1px]">
        <div className="flex h-[23px] w-[164px] items-center rounded-[2px] border border-[#c8c6c4] bg-[#fafafa] pl-1 text-[12px] tracking-[-0.28px] whitespace-nowrap text-[#242424]">
          {value}
          <svg width="24" height="8" viewBox="0 0 24 8" fill="none" stroke="#605e5c" className="mr-[4px] ml-auto">
            <path d="M.5 2L4 5.500L7.500 2" />
            <path d="M17 1L23 7M23 1L17 7" stroke="#8a8886" strokeWidth=".9" />
          </svg>
        </div>
      </div>
    </div>
  );
}

function VizPanel() {
  return (
    <aside className="flex w-[182px] shrink-0 flex-col overflow-hidden border-x border-[#c8c6c4]">
      <div className="flex h-[34px] shrink-0 items-center justify-between pt-[5px] pr-[10px] pl-2">
        <h2 className="text-[15.200px] font-semibold tracking-[-0.12px] text-[#242424]">Visualizaciones</h2>
        <DoubleChevron />
      </div>
      <div className="h-[23px] shrink-0 pl-2 text-[12px] leading-[24px] font-semibold tracking-[-0.4px] text-[#323130]">Compilar visual</div>
      <div className="relative flex h-[45px] shrink-0 border-b border-[#c8c6c4] pl-2">
        <div className="flex h-[32px] w-[32px] items-center justify-center rounded bg-white">
          <svg width="24" height="26" viewBox="0 0 24 26">
            <path d="M0 2.500H19" stroke={K} />
            <rect x=".5" y="6.500" width="23" height="7.500" fill="#117865" stroke="#424242" strokeDasharray="2 1" />
            <rect x=".5" y="17.500" width="23" height="7.500" fill="#117865" stroke="#424242" strokeDasharray="2 1" />
          </svg>
        </div>
        <svg width="24" height="24" viewBox="0 0 24 24" fill="none" stroke="#797775" strokeWidth="1.300" className="mt-[5px] ml-[39px]">
          <path d="M5 19.500H1.500V9.500H6.500V19M6.500 17V1.500H11.500V12M11.500 4.500H16.500V7" />
          <path d="M22 6L13 15L15.500 17L22.500 7Z" />
          <path d="M12.500 15Q9 15 9 19Q8 21 5.500 22Q12 23.500 15 19.500Q15.500 17.500 15 17Z" />
        </svg>
        <svg width="26" height="26" viewBox="0 0 26 26" fill="none" stroke="#797775" strokeWidth="1.300" className="mt-[2px] ml-[40px]">
          <circle cx="11" cy="11.500" r="9.800" />
          <path d="M18 18.500L24.500 25" strokeWidth="2.500" />
          <path d="M3 14L8 8.500L12 11.500L19 5M5 19V14.500M8.500 20V12.500M12 20V14.500M15.500 19V11.500M18.500 17V9" />
        </svg>
        <svg width="18" height="9" viewBox="0 0 18 9" className="absolute -bottom-px left-[15px]">
          <path d="M0 8.500L9 1L18 8.500V9H0Z" fill="#f4f4f4" />
          <path d="M0 8.500H1L9 1L17 8.500H18" fill="none" stroke="#c8c6c4" />
        </svg>
      </div>
      <Gallery />
      <div className="flex h-[183px] shrink-0 overflow-hidden pl-[5px]">
        <div className="w-[169px] shrink-0">
          <Well title="Ubicación" value="Estado" />
          <Well title="Leyenda" value="Clasificacion Asequibil..." />
          <Well title="Saturación de color" value="Suma de Asequibilidad" />
        </div>
        <div className="mt-[2px] h-[84px] w-[6px] rounded-full bg-[#b0b0b0]" />
      </div>
    </aside>
  );
}

/* ---------- Data pane ---------- */

const fields: { t: string; k: "s" | "f" | ""; on?: boolean; box?: string }[] = [
  { t: "Asequibilidad", k: "s", on: true, box: "-left-px top-[1px] h-[23px] w-[163px]" },
  { t: "Bienestar", k: "s" },
  { t: "Clasificacion Asequibilidad", k: "f", on: true, box: "-left-px top-[1px] h-[24px] w-[205px]" },
  { t: "Clasificacion Crimen", k: "f" },
  { t: "Clasificación general", k: "s" },
  { t: "Clima", k: "s" },
  { t: "CodigosEstado.Código de estado", k: "" },
  { t: "Crimen", k: "s" },
  { t: "Cultura y diversidad", k: "s" },
  { t: "División", k: "" },
  { t: "Estado", k: "", on: true, box: "left-[1px] top-0 h-[23px] w-[118px]" },
  { t: "Puntuación general", k: "s" },
  { t: "Región", k: "" },
];

function TableIcon({ check }: { check?: boolean }) {
  return (
    <svg width="22" height="20" viewBox="0 0 22 20" fill="none" stroke="#323130" strokeWidth="1.200" className="mr-[-4px] shrink-0">
      <path d="M2.500 4.500Q2.500 3.500 4 3.500H12Q13.500 3.500 13.500 5V13Q13.500 14.500 12 14.500H4Q2.500 14.500 2.500 13ZM6 3.500V14.500M10 3.500V14.500M2.500 7H13.500M2.500 11H13.500" />
      {check && (
        <>
          <circle cx="14" cy="14" r="6" fill="#117865" stroke="none" />
          <path d="M11.500 14L13.300 15.800L16.800 12.300" stroke="#fff" strokeWidth="1.500" />
        </>
      )}
    </svg>
  );
}

function FieldIcon({ k }: { k: string }) {
  if (k === "s")
    return (
      <svg width="12" height="12" viewBox="0 0 12 12" fill="none" stroke="#323130" strokeWidth="1.100">
        <path d="M10.500 2.500V.6H1L6.500 6L1 11.400H10.500V9.500" />
      </svg>
    );
  if (k === "f")
    return (
      <svg width="16" height="16" viewBox="0 0 16 16" fill="none" stroke="#323130" strokeWidth="1.100">
        <path d="M4 .8H2.500Q.6 .8 .6 3V10Q.6 12.300 3 12.300H4V.8H10Q12 .8 12 3V5M4 4.500H7M.6 4.500H2M.6 8.500H2" />
        <path d="M10.500 3.500Q8.500 3 8 6L6.500 13Q6 15 4.500 14.500M6 7.500H10.500M10 10L14.500 15.300M14.500 10L10 15.300" />
      </svg>
    );
  return null;
}

function DataPanel() {
  return (
    <aside className="flex w-[264px] shrink-0 flex-col">
      <div className="flex h-[45px] items-start justify-between pt-[8px] pr-2 pl-2">
        <h2 className="text-[15.200px] leading-[22px] font-semibold tracking-[-0.1px] text-[#242424]">Datos</h2>
        <span className="mt-[7px]"><DoubleChevron /></span>
      </div>
      <div className="ml-1 flex h-6 w-[258px] items-center rounded border border-[#c8c6c4] border-b-[#605e5c] bg-white pl-[12px] text-[13px] text-[#616161]">
        <svg width="15" height="15" viewBox="0 0 15 15" fill="none" stroke="#616161" className="mr-[6px]">
          <circle cx="6" cy="6" r="5.300" />
          <path d="M10 10L14.300 14.300" />
        </svg>
        <span className="pt-[2px]">Buscar</span>
      </div>
      <div className="mt-[10px] text-[12px] leading-6 tracking-[-0.26px] text-[#424242]">
        <div className="flex h-6 items-center pl-[15px]">
          <svg width="8" height="8" viewBox="0 0 8 8" fill="none" stroke="#797775" className="mr-[4px]"><path d="M2.500 .5L6 4L2.500 7.500" /></svg>
          <TableIcon />
          <span className="ml-[2px]">CodigosEstado</span>
        </div>
        <div className="flex h-6 items-center pl-[15px]">
          <svg width="8" height="8" viewBox="0 0 8 8" fill="none" stroke="#797775" className="mr-[4px]"><path d="M.5 2.500L4 6L7.500 2.500" /></svg>
          <TableIcon check />
          <span className="ml-[2px]">EstadosJubilacion</span>
        </div>
        {fields.map((f) => (
          <div key={f.t} className="relative ml-[31px] flex h-6 items-center pl-[13px]">
            {f.on ? (
              <svg width="12" height="12" viewBox="0 0 12 12" className="mb-[2px] shrink-0">
                <rect x=".5" y=".5" width="11" height="11" rx="1" fill="#117865" stroke="#424242" />
                <path d="M2.500 6L5 8.500L9.500 3.500" fill="none" stroke="#fff" />
              </svg>
            ) : (
              <i className="mb-[2px] size-3 shrink-0 rounded-[2px] border border-[#605e5c]" />
            )}
            <span className="mb-[2px] ml-2 flex w-[18px] shrink-0"><FieldIcon k={f.k} /></span>
            <span className="whitespace-nowrap">{f.t}</span>
            {f.box && <i className={`absolute border-2 border-[#e91c1c] ${f.box}`} />}
          </div>
        ))}
      </div>
    </aside>
  );
}

export default function App() {
  return (
    <div className="flex h-[654px] w-[1364px] flex-col overflow-hidden bg-[#f4f4f4] font-['Open_Sans',sans-serif]">
      <TopBar />
      <Ribbon />
      <div className="flex h-[520px]">
        <LeftRail />
        <Canvas />
        <VizPanel />
        <DataPanel />
      </div>
    </div>
  );
}
